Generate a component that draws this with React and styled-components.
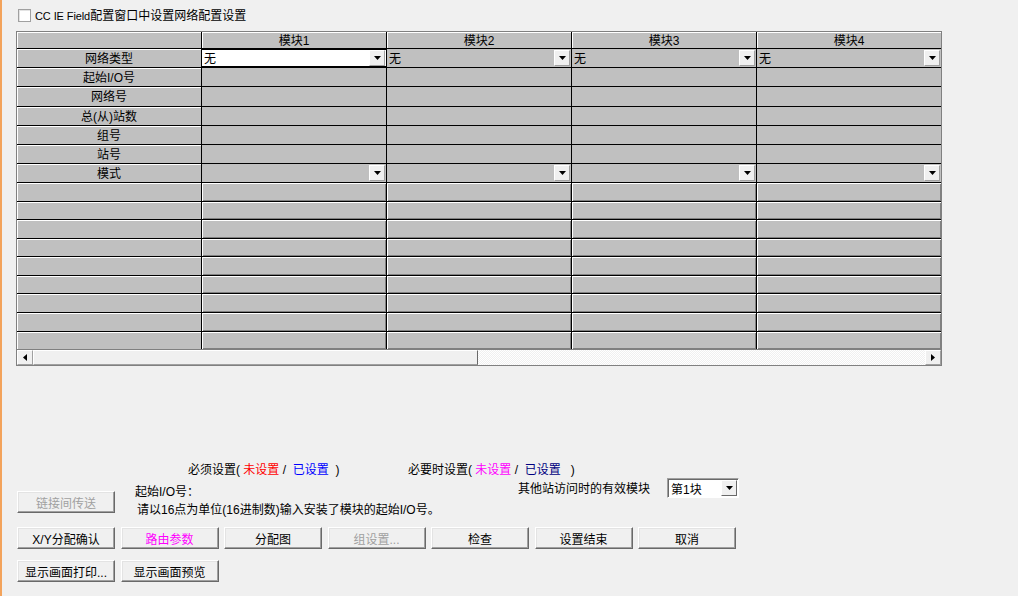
import React from 'react';
import styled, { createGlobalStyle, css } from 'styled-components';

const GlobalStyle = createGlobalStyle`
  html, body {
    margin: 0;
    padding: 0;
    background: #f0f0f0;
  }
  body {
    font-family: "Liberation Sans", "Noto Sans CJK SC", sans-serif;
    font-size: 12px;
    color: #000000;
  }
  * {
    box-sizing: border-box;
  }
`;

const MODULES = ['模块1', '模块2', '模块3', '模块4'];

const NAMED_ROWS = [
  { label: '网络类型', kind: 'combo', value: '无' },
  { label: '起始I/O号', kind: 'plain' },
  { label: '网络号', kind: 'plain' },
  { label: '总(从)站数', kind: 'plain' },
  { label: '组号', kind: 'plain' },
  { label: '站号', kind: 'plain' },
  { label: '模式', kind: 'combo', value: '' },
];

const BLANK_ROWS = 9;

const ACTIONS = [
  { label: 'X/Y分配确认' },
  { label: '路由参数', tone: 'magenta' },
  { label: '分配图' },
  { label: '组设置...', disabled: true },
  { label: '检查' },
  { label: '设置结束' },
  { label: '取消' },
];

function DownArrow() {
  return (
    <svg width="7" height="4" viewBox="0 0 7 4">
      <polygon points="0,0 7,0 3.5,4" fill="#000" />
    </svg>
  );
}

function SideArrow({ dir }) {
  return (
    <svg width="4" height="7" viewBox="0 0 4 7">
      {dir === 'left' ? (
        <polygon points="4,0 4,7 0,3.5" fill="#000" />
      ) : (
        <polygon points="0,0 0,7 4,3.5" fill="#000" />
      )}
    </svg>
  );
}

function App() {
  return (
    <>
      <GlobalStyle />
      <Page>
        <CheckRow>
          <CheckBox />
          <CheckLabel>
            <Latin>CC IE Field</Latin>配置窗口中设置网络配置设置
          </CheckLabel>
        </CheckRow>

        <GridFrame>
          <Grid>
            <HeaderCell />
            {MODULES.map((m) => (
              <HeaderCell key={m}>{m}</HeaderCell>
            ))}

            {NAMED_ROWS.map((row) => (
              <React.Fragment key={row.label}>
                <LabelCell>{row.label}</LabelCell>
                {MODULES.map((m, i) =>
                  row.kind === 'combo' ? (
                    <ComboCell key={m} $active={row.label === '网络类型' && i === 0}>
                      <ComboText>{row.value}</ComboText>
                      <DropButton>
                        <DownArrow />
                      </DropButton>
                    </ComboCell>
                  ) : (
                    <PlainCell key={m} />
                  )
                )}
              </React.Fragment>
            ))}

            {Array.from({ length: BLANK_ROWS }).map((_, r) => (
              <React.Fragment key={r}>
                <LabelCell />
                {MODULES.map((m) => (
                  <BlankCell key={m} />
                ))}
              </React.Fragment>
            ))}
          </Grid>
          <ScrollBar>
            <ScrollButton>
              <SideArrow dir="left" />
            </ScrollButton>
            <Thumb />
            <Track />
            <ScrollButton>
              <SideArrow dir="right" />
            </ScrollButton>
          </ScrollBar>
        </GridFrame>

        <Legend>
          <LegendGroup $width="220px">
            必须设置(&nbsp;
            <Mark $color="#ff0000">未设置</Mark>
            &nbsp;/&nbsp;&nbsp;
            <Mark $color="#0000ff">已设置</Mark>
            &nbsp;&nbsp;)
          </LegendGroup>
          <LegendGroup>
            必要时设置(&nbsp;
            <Mark $color="#ff00ff">未设置</Mark>
            &nbsp;/&nbsp;&nbsp;
            <Mark $color="#000080">已设置</Mark>
            &nbsp;&nbsp;&nbsp;)
          </LegendGroup>
        </Legend>

        <InfoRow>
          <WinButton $disabled $offset="12px">
            链接间传送
          </WinButton>
          <Hint>
            <div>起始I/O号：</div>
            <HintLine>请以16点为单位(16进制数)输入安装了模块的起始I/O号。</HintLine>
          </Hint>
          <AccessGroup>
            <span>其他站访问时的有效模块</span>
            <SmallCombo>
              <SmallComboText>第1块</SmallComboText>
              <SmallDrop>
                <DownArrow />
              </SmallDrop>
            </SmallCombo>
          </AccessGroup>
        </InfoRow>

        <ButtonRow>
          {ACTIONS.map((a) => (
            <WinButton key={a.label} $disabled={a.disabled} $tone={a.tone}>
              {a.label}
            </WinButton>
          ))}
        </ButtonRow>
        <ButtonRow $gapTop="11px">
          <WinButton>显示画面打印...</WinButton>
          <WinButton>显示画面预览</WinButton>
        </ButtonRow>
      </Page>
    </>
  );
}

const Page = styled.div`
  width: 1018px;
  height: 596px;
  overflow: hidden;
  border-left: 2px solid #f3a35b;
  padding: 8px 0 0 14px;
  display: flex;
  flex-direction: column;
`;

const CheckRow = styled.div`
  display: flex;
  align-items: center;
  gap: 4px;
  height: 14px;
  padding-left: 2px;
  margin-bottom: 9px;
`;

const CheckBox = styled.span`
  width: 13px;
  height: 13px;
  background: #ffffff;
  border: 1px solid #a0a0a0;
  box-shadow: inset 1px 1px 0 #e3e3e3;
`;

const CheckLabel = styled.span`
  font-size: 12px;
  line-height: 14px;
  padding-top: 1px;
  white-space: nowrap;
`;

const Latin = styled.span`
  font-size: 11px;
  letter-spacing: -0.1px;
`;

const GridFrame = styled.div`
  width: 926px;
  border: 1px solid #808080;
  background: #f0f0f0;
`;

const Grid = styled.div`
  display: grid;
  grid-template-columns: repeat(5, 184px);
  grid-template-rows: 16px repeat(6, 18.2px) 17.8px repeat(${BLANK_ROWS}, 17.6px);
  gap: 1px;
  background: #000000;
`;

const cellBase = css`
  background: #c0c0c0;
  display: flex;
  align-items: center;
  padding-top: 2px;
  font-size: 12px;
  line-height: 14px;
  white-space: nowrap;
  overflow: hidden;
`;

const HeaderCell = styled.div`
  ${cellBase};
  justify-content: center;
  box-shadow: inset 1px 1px 0 #ffffff;
`;

const LabelCell = styled.div`
  ${cellBase};
  justify-content: center;
  box-shadow: inset 1px 1px 0 #ffffff;
`;

const PlainCell = styled.div`
  ${cellBase};
`;

const BlankCell = styled.div`
  ${cellBase};
  box-shadow: inset 1px 1px 0 #ffffff, inset -1px -1px 0 #808080;
`;

const ComboCell = styled.div`
  ${cellBase};
  padding-top: 0;
  justify-content: space-between;
  padding-left: 1px;
  padding-right: 1px;
  ${({ $active }) =>
    $active &&
    css`
      background: #ffffff;
      box-shadow: inset 0 1px 0 #000000, inset 0 -1px 0 #000000;
    `}
`;

const ComboText = styled.span`
  padding-left: 1px;
  padding-top: 2px;
`;

const DropButton = styled.span`
  width: 16px;
  height: 16px;
  display: flex;
  align-items: center;
  justify-content: center;
  background: #f0f0f0;
  border-top: 1px solid #ffffff;
  border-left: 1px solid #ffffff;
  border-bottom: 1px solid #a0a0a0;
  border-right: 1px solid #a0a0a0;
`;

const ScrollBar = styled.div`
  display: flex;
  height: 16px;
  border-top: 1px solid #808080;
`;

const ScrollButton = styled.div`
  width: 16px;
  flex: none;
  display: flex;
  align-items: center;
  justify-content: center;
  background: #f0f0f0;
  border-top: 1px solid #ffffff;
  border-left: 1px solid #ffffff;
  border-bottom: 1px solid #a0a0a0;
  border-right: 1px solid #a0a0a0;
`;

const Thumb = styled.div`
  width: 445px;
  flex: none;
  background: #f0f0f0;
  border-top: 1px solid #ffffff;
  border-left: 1px solid #ffffff;
  border-bottom: 1px solid #a0a0a0;
  border-right: 1px solid #696969;
`;

const Track = styled.div`
  flex: 1;
  background: repeating-conic-gradient(#f0f0f0 0 25%, #ffffff 0 50%) 0 0 / 2px 2px;
`;

const Legend = styled.div`
  display: flex;
  margin-top: 96px;
  padding-left: 172px;
  height: 14px;
  line-height: 14px;
  padding-top: 1px;
  font-size: 12px;
  white-space: nowrap;
`;

const LegendGroup = styled.div`
  width: ${({ $width }) => $width || 'auto'};
`;

const Mark = styled.span`
  color: ${({ $color }) => $color};
`;

const InfoRow = styled.div`
  display: flex;
  align-items: flex-start;
  height: 40px;
  margin-top: 3px;
  padding-left: 1px;
`;

const Hint = styled.div`
  width: 383px;
  margin-left: 20px;
  margin-top: 4px;
  line-height: 18px;
  font-size: 12px;
  white-space: nowrap;
`;

const HintLine = styled.div`
  padding-left: 2px;
`;

const AccessGroup = styled.div`
  display: flex;
  align-items: center;
  gap: 17px;
  height: 19px;
  margin-top: -1px;
  font-size: 12px;
  white-space: nowrap;
`;

const SmallCombo = styled.div`
  width: 72px;
  height: 20px;
  display: flex;
  align-items: center;
  justify-content: space-between;
  background: #ffffff;
  border-top: 1px solid #a0a0a0;
  border-left: 1px solid #a0a0a0;
  border-bottom: 1px solid #ffffff;
  border-right: 1px solid #ffffff;
  box-shadow: inset 1px 1px 0 #696969;
  padding: 1px 1px 0 2px;
`;

const SmallComboText = styled.span`
  padding-left: 1px;
`;

const SmallDrop = styled.span`
  width: 16px;
  height: 16px;
  display: flex;
  align-items: center;
  justify-content: center;
  background: #f0f0f0;
  border-top: 1px solid #ffffff;
  border-left: 1px solid #ffffff;
  border-bottom: 1px solid #696969;
  border-right: 1px solid #696969;
`;

const ButtonRow = styled.div`
  display: flex;
  gap: 5.5px;
  margin-top: ${({ $gapTop }) => $gapTop || '8px'};
  padding-left: 1px;
`;

const WinButton = styled.div`
  width: 98px;
  height: 22px;
  flex: none;
  margin-top: ${({ $offset }) => $offset || '0'};
  display: flex;
  align-items: center;
  justify-content: center;
  font-size: 12px;
  white-space: nowrap;
  background: #f0f0f0;
  border-top: 1px solid #ffffff;
  border-left: 1px solid #ffffff;
  border-bottom: 1px solid #696969;
  border-right: 1px solid #696969;
  box-shadow: inset -1px -1px 0 #a0a0a0, inset 1px 1px 0 #e3e3e3;
  color: ${({ $disabled, $tone }) =>
    $disabled ? '#a0a0a0' : $tone === 'magenta' ? '#ff00ff' : '#000000'};
`;

export default App;
